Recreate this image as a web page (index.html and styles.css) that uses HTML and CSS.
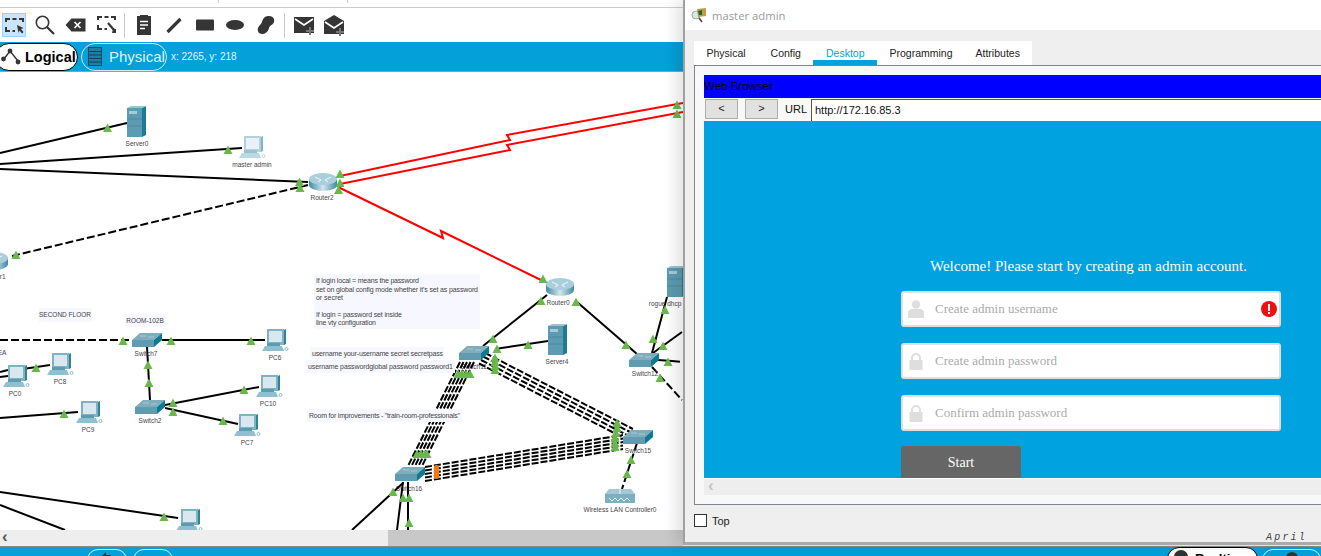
FILE: index.html
```html
<!DOCTYPE html>
<html lang="en">
<head>
<meta charset="utf-8">
<title>Packet Tracer - master admin</title>
<link rel="stylesheet" href="styles.css">
</head>
<body>
<div class="app">
  <div class="topstrip"><i class="tick tick-a"></i><i class="tick tick-b"></i></div>

  <div class="toolbar">
    <span class="tool tool-on"><svg viewBox="0 0 24 24"><path class="stroke-dashbox" d="M4 9V6H8M10.500 6H14.500M17 6H21V9M4 14V18H8M10.500 18H13"/><path class="ink" d="M15 12l6.500 3-2.500 1 2.500 3-1.500 1.500-2.500-3-1 2.500z"/></svg></span>
    <span class="tool"><svg viewBox="0 0 24 24"><circle class="stroke-thin" cx="9.500" cy="9.500" r="6.200"/><path class="stroke-mid" d="M14 14l7 7"/></svg></span>
    <span class="tool"><svg viewBox="0 0 24 24"><path class="ink" d="M2.500 12L8.500 5.500H22.500V18.500H8.500z"/><path class="stroke-white" d="M11.500 9l6 6M17.500 9l-6 6"/></svg></span>
    <span class="tool"><svg viewBox="0 0 24 24"><path class="stroke-dashbox" d="M4 7V4H8M10.500 4H14.500M17 4H21V7M4 12V16H8M10.500 16H13"/><path class="stroke-mid" d="M14 10l6 7"/><path class="ink" d="M19 16h3v4h-4z"/></svg></span>
    <i class="sep"></i>
    <span class="tool"><svg viewBox="0 0 24 24"><path class="ink" d="M5 3H8V2H16V3H19V22H5z"/><path class="stroke-white" d="M8 8.500H16M8 12H16M8 15.500H13"/></svg></span>
    <span class="tool"><svg viewBox="0 0 24 24"><path class="stroke-thick" d="M5.500 19L18.500 6"/></svg></span>
    <span class="tool"><svg viewBox="0 0 24 24"><rect class="ink" x="3" y="6.500" width="18" height="11" rx="1"/></svg></span>
    <span class="tool"><svg viewBox="0 0 24 24"><ellipse class="ink" cx="12" cy="12" rx="9" ry="5"/></svg></span>
    <span class="tool"><svg viewBox="0 0 24 24"><path class="ink" d="M15 3c4 0 6 3 5 6-1 3-4 3-5 6-1 4-4 6-7 6-3 0-5-3-4-6 1-3 3-3 4-6 1-4 3-6 7-6z"/></svg></span>
    <i class="sep"></i>
    <span class="tool"><svg viewBox="0 0 24 24"><path class="ink" d="M2 4H22V20H2z"/><path class="stroke-white" d="M3 6l9 6 9-6"/><path class="stroke-plus" d="M18 14v8M14 18h8"/></svg></span>
    <span class="tool"><svg viewBox="0 0 24 24"><path class="ink" d="M2 8L12 2 22 8V21H2z"/><path class="stroke-white" d="M3 9l9 6 9-6"/><path class="stroke-plus" d="M18 15v8M14 19h8"/></svg></span>
  </div>

  <div class="modebar">
    <span class="pill pill-logical">
      <svg class="mode-icon" viewBox="0 0 20 20"><path class="stroke-node" d="M9 4L3 12M9 4l8 10"/><circle class="ink" cx="9" cy="4" r="2.400"/><circle class="ink" cx="2.500" cy="12" r="2.400"/><circle class="ink" cx="17" cy="15" r="2.400"/></svg>
      <b>Logical</b>
    </span>
    <span class="pill pill-physical">
      <svg class="rack-icon" viewBox="0 0 14 19"><rect class="rack-body" x=".5" y=".5" width="13" height="18"/><path class="rack-line" d="M1 4.500H13M1 8H13M1 11.500H13M1 15H13"/></svg>
      <span>Physical</span>
    </span>
    <span class="coords">x: 2265, y: 218</span>
  </div>

  <svg class="canvas" viewBox="0 72 1321 458" xmlns="http://www.w3.org/2000/svg">
    <defs>
      <linearGradient id="rg" x1="0" x2="1" y1="0" y2="0"><stop offset="0" stop-color="#3f8aa3"/><stop offset=".5" stop-color="#d3e6ec"/><stop offset="1" stop-color="#3f8aa3"/></linearGradient>
      <polygon id="tri" points="0,-4.500 4.500,4 -4.500,4" fill="#6ab84c"/>
      <g id="server">
        <rect x="0" y="2" width="15" height="29" fill="#5c9bb1"/>
        <polygon points="15,2 19,0 19,29 15,31" fill="#1d7c93"/>
        <polygon points="0,2 4,0 19,0 15,2" fill="#9cc3cf"/>
        <rect x="2" y="5" width="8" height="3" fill="#a7cbd6"/>
        <path d="M0 13H15M0 20H15" stroke="#4a8aa0" fill="none"/>
      </g>
      <g id="pc">
        <rect x="5" y="0" width="17" height="16" fill="#7fb3c2"/>
        <polygon points="22,1 24,0 24,15 22,16" fill="#2f8298"/>
        <rect x="7" y="2" width="13" height="11" fill="#d9e8ef"/>
        <polygon points="0,22 3,17 20,17 22,22" fill="#8fc0cf"/>
        <rect x="5" y="14" width="13" height="3" fill="#5c9bb1"/>
        <circle cx="24.500" cy="20" r="1.500" fill="none" stroke="#8fc0cf"/>
      </g>
      <g id="router">
        <path d="M0 6V12A14 6 0 0 0 28 12V6Z" fill="url(#rg)"/>
        <ellipse cx="14" cy="6" rx="14" ry="6" fill="#a9cfdc"/>
        <path d="M6 4l6 3M22 4l-6 3M9 9l3-2M19 9l-3-2" stroke="#f2f8fa" fill="none"/>
      </g>
      <g id="switch">
        <polygon points="0,7 8,0 30,0 22,7" fill="#7fadbc"/>
        <rect x="0" y="7" width="22" height="7" fill="#5f9cb2"/>
        <polygon points="22,7 30,0 30,7 22,14" fill="#0f7a8f"/>
        <path d="M8 3h6M16 4h6" stroke="#a8cad5" fill="none"/>
      </g>
    </defs>

    <g class="lbl">
      <text x="474" y="369">Switch11</text>
      <text x="409" y="491">Switch16</text>
    </g>

    <g class="link">
      <path d="M0 153L127 123"/>
      <path d="M0 164L242 148"/>
      <path d="M0 169L308 182"/>
      <path d="M547 295L483 346"/>
      <path d="M548 341L495 349"/>
      <path d="M577 302L637 354"/>
      <path d="M667 297L652 353"/>
      <path d="M653 353L682 332"/>
      <path d="M658 360L672 361"/>
      <path d="M403 482L397 530"/>
      <path d="M408 482V530"/>
      <path d="M403 483L352 530"/>
      <path d="M162 340H265"/>
      <path d="M147 347L150 400"/>
      <path d="M165 405L259 387"/>
      <path d="M165 408L238 424"/>
      <path d="M0 372L8 370M0 377L8 376"/>
      <path d="M23 369L50 365"/>
      <path d="M0 418L78 412"/>
      <path d="M0 492L178 518"/>
      <path d="M0 505L65 530"/>
    </g>
    <g class="link link-dash">
      <path d="M12 256L308 185"/>
      <path d="M0 340H132"/>
      <path d="M672 361L682 362"/>
      <path d="M652 367L682 400"/>
      <path d="M637 443L622 489"/>
    </g>
    <g class="link-red">
      <path d="M340 176L510 140 507 135 683 103"/>
      <path d="M340 184L510 150 507 145 683 112"/>
      <path d="M338 187L443 238 441 231 543 281"/>
    </g>
    <g class="bundle">
      <path d="M485 353L633 429"/>
      <path d="M483 356.500L630 432"/>
      <path d="M481 360L627 435"/>
      <path d="M479 363.500L624 438"/>
      <path d="M460 362L408 466"/>
      <path d="M463.500 362L411.500 466"/>
      <path d="M467 362L415 466"/>
      <path d="M470.500 362L418.500 466"/>
      <path d="M474 362L422 466"/>
      <path d="M425 467L623 435"/>
      <path d="M425 470.500L623 438.500"/>
      <path d="M425 474L623 442"/>
      <path d="M425 477.500L623 445.500"/>
      <path d="M425 481L623 449"/>
    </g>
    <rect class="marker" x="434" y="465" width="5" height="14" rx="2"/>

    <rect class="note" x="314" y="274" width="166" height="55"/>
    <rect class="note" x="310" y="347" width="134" height="12"/>
    <rect class="note" x="306" y="360" width="149" height="13"/>
    <rect class="note" x="307" y="409" width="155" height="13"/>
    <rect class="note" x="39" y="308" width="53" height="14"/>
    <rect class="note" x="125" y="314" width="41" height="13"/>
    <rect class="note" x="0" y="346" width="8" height="12"/>

    <use href="#server" x="127" y="106"/>
    <use class="faded" href="#pc" x="239" y="136"/>
    <use href="#router" x="309" y="173"/>
    <use href="#router" x="-20" y="252"/>
    <use href="#router" x="546" y="278"/>
    <use href="#server" x="548" y="324"/>
    <use href="#server" x="667" y="266"/>
    <use href="#switch" x="459" y="346"/>
    <use href="#switch" x="629" y="353"/>
    <use href="#switch" x="623" y="430"/>
    <use href="#switch" x="395" y="467"/>
    <use href="#switch" x="132" y="333"/>
    <use href="#switch" x="135" y="400"/>
    <use href="#pc" x="262" y="329"/>
    <use href="#pc" x="256" y="375"/>
    <use href="#pc" x="234" y="414"/>
    <use href="#pc" x="3" y="365"/>
    <use href="#pc" x="47" y="353"/>
    <use href="#pc" x="76" y="401"/>
    <use href="#pc" x="176" y="509"/>
    <g>
      <rect x="605" y="494" width="30" height="9" fill="#7cb0c1"/>
      <polygon points="609,489 631,489 635,494 605,494" fill="#a3c8d4"/>
      <path d="M620 488v6M609 498l3 3 3-3 3 3 3-3 3 3 3-3 3 3" stroke="#eef6f8" fill="none"/>
    </g>

    <g class="tris">
      <use href="#tri" x="107.500" y="128"/><use href="#tri" x="228" y="150"/><use href="#tri" x="299.500" y="182"/>
      <use href="#tri" x="300" y="188"/><use href="#tri" x="16" y="255"/><use href="#tri" x="340" y="174"/>
      <use href="#tri" x="340" y="183"/><use href="#tri" x="338.500" y="190"/>
      <use href="#tri" x="677" y="105"/><use href="#tri" x="677" y="114"/>
      <use href="#tri" x="543" y="279"/><use href="#tri" x="541" y="301"/><use href="#tri" x="576" y="302"/>
      <use href="#tri" x="493" y="339"/><use href="#tri" x="528" y="345"/><use href="#tri" x="497" y="349"/>
      <use href="#tri" x="626" y="345"/><use href="#tri" x="665" y="310"/><use href="#tri" x="653" y="339"/>
      <use href="#tri" x="663" y="346"/><use href="#tri" x="668" y="362"/><use href="#tri" x="660" y="378"/>
      <use href="#tri" x="495" y="358"/><use href="#tri" x="495" y="362"/><use href="#tri" x="495" y="366"/><use href="#tri" x="495" y="370"/>
      <use href="#tri" x="458" y="374"/><use href="#tri" x="462" y="374"/><use href="#tri" x="466" y="374"/><use href="#tri" x="470" y="374"/>
      <use href="#tri" x="417" y="454"/><use href="#tri" x="421" y="454"/><use href="#tri" x="425" y="454"/><use href="#tri" x="427" y="454"/>
      <use href="#tri" x="617" y="423"/><use href="#tri" x="617" y="428"/><use href="#tri" x="616" y="433"/><use href="#tri" x="615" y="438"/><use href="#tri" x="615" y="443"/><use href="#tri" x="615" y="447"/>
      <use href="#tri" x="631" y="460"/><use href="#tri" x="627" y="474"/>
      <use href="#tri" x="393" y="492"/><use href="#tri" x="403" y="498"/><use href="#tri" x="409" y="498"/><use href="#tri" x="409" y="523"/>
      <use href="#tri" x="123" y="341"/><use href="#tri" x="171" y="341"/><use href="#tri" x="251" y="341"/>
      <use href="#tri" x="148" y="365"/><use href="#tri" x="149" y="383"/>
      <use href="#tri" x="244" y="390"/><use href="#tri" x="173" y="403"/><use href="#tri" x="223" y="421"/><use href="#tri" x="173" y="412"/>
      <use href="#tri" x="36" y="368"/><use href="#tri" x="64" y="414"/><use href="#tri" x="164" y="517"/>
    </g>

    <g class="lbl">
      <text x="137" y="146">Server0</text>
      <text x="252" y="167">master admin</text>
      <text x="322" y="200">Router2</text>
      <text x="-6" y="279">Router1</text>
      <text x="558" y="305">Router0</text>
      <text x="557" y="364">Server4</text>
      <text x="675" y="306">rogue dhcp server</text>
      <text x="645" y="376">Switch12</text>
      <text x="638" y="453">Switch15</text>
      <text x="620" y="512">Wireless LAN Controller0</text>
      <text x="146" y="356">Switch7</text>
      <text x="150" y="423">Switch2</text>
      <text x="275" y="360">PC6</text>
      <text x="268" y="406">PC10</text>
      <text x="247" y="445">PC7</text>
      <text x="15" y="396">PC0</text>
      <text x="60" y="384">PC8</text>
      <text x="88" y="432">PC9</text>
      <text x="65" y="317">SECOND FLOOR</text>
      <text x="145" y="323">ROOM-102B</text>
      <text x="2" y="355">EA</text>
    </g>
    <g class="notetext">
      <text x="316" y="283" textLength="103" lengthAdjust="spacing">If login local = means the password</text>
      <text x="316" y="292" textLength="162" lengthAdjust="spacing">set on global config mode whether it's set as password</text>
      <text x="316" y="300" textLength="27" lengthAdjust="spacing">or secret</text>
      <text x="316" y="317" textLength="86" lengthAdjust="spacing">If login = password set inside</text>
      <text x="316" y="325" textLength="60" lengthAdjust="spacing">line vty configuration</text>
      <text x="312" y="356" textLength="131" lengthAdjust="spacing">username your-username secret secretpass</text>
      <text x="308" y="369" textLength="145" lengthAdjust="spacing">username passwordglobal password password1</text>
      <text x="309" y="418" textLength="151" lengthAdjust="spacing">Room for improvements - "train-room-professionals"</text>
    </g>
  </svg>

  <div class="hscroll"><span class="hscroll-track"><span class="hscroll-arrow">‹</span></span><span class="hscroll-thumb"></span></div>

  <div class="footer">
    <span class="fpill fpill-a"><svg viewBox="0 0 16 10"><path class="ink" d="M3 5l4-4v3h3c2 0 4 2 4 5H3z"/></svg></span>
    <span class="fpill fpill-b"></span>
    <span class="fgrow"></span>
    <span class="realtime"><i class="rt-dot"></i><b>Realtime</b></span>
    <span class="fpill fpill-c"><svg viewBox="0 0 16 10"><circle class="ink" cx="8" cy="7" r="6"/></svg></span>
  </div>

  <section class="window">
    <header class="titlebar">
      <svg class="title-icon" viewBox="0 0 16 16"><circle cx="5" cy="8" r="4" fill="#dfe4e4" stroke="#9aa" stroke-width="1"/><path d="M8 11l3 4" stroke="#444" stroke-width="1.500"/><path d="M6 2l9-1 0 8-8 1z" fill="#c59a3c"/><path d="M7 4l4-1 0 5-3 0z" fill="#1c6b2a"/></svg>
      <span>master admin</span>
    </header>
    <div class="win-body">
      <nav class="tabs">
        <span class="tab">Physical</span>
        <span class="tab">Config</span>
        <span class="tab tab-on">Desktop</span>
        <span class="tab tab-prog">Programming</span>
        <span class="tab">Attributes</span>
      </nav>
      <div class="panel">
        <div class="app-title">Web Browser</div>
        <div class="navrow">
          <span class="navbtn">&lt;</span>
          <span class="navbtn">&gt;</span>
          <span class="url-label">URL</span>
          <span class="url-box">http://172.16.85.3</span>
        </div>
        <div class="page">
          <div class="welcome">Welcome! Please start by creating an admin account.</div>
          <div class="form">
            <div class="field">
              <svg class="field-icon" viewBox="0 0 16 18"><circle cx="8" cy="4.500" r="4.200"/><path d="M0 18V13c0-2.500 2-4 4-4h8c2 0 4 1.500 4 4v5z"/></svg>
              <span>Create admin username</span>
              <svg class="alert" viewBox="0 0 16 16"><circle cx="8" cy="8" r="8" fill="#ee0f0f"/><rect x="7" y="3" width="2" height="7" fill="#fff"/><rect x="7" y="11" width="2" height="2" fill="#fff"/></svg>
            </div>
            <div class="field">
              <svg class="field-icon" viewBox="0 0 16 18"><path class="lock-arc" d="M4 9V6a4 4 0 0 1 8 0v3"/><rect x="1.500" y="8" width="13" height="10"/></svg>
              <span>Create admin password</span>
            </div>
            <div class="field">
              <svg class="field-icon" viewBox="0 0 16 18"><path class="lock-arc" d="M4 9V6a4 4 0 0 1 8 0v3"/><rect x="1.500" y="8" width="13" height="10"/></svg>
              <span>Confirm admin password</span>
            </div>
            <div class="start">Start</div>
          </div>
        </div>
        <div class="page-scroll"><span>‹</span></div>
      </div>
      <label class="topcheck"><i class="box"></i><span>Top</span></label>
    </div>
  </section>

  <span class="watermark">April</span>
</div>
</body>
</html>
```

FILE: styles.css
```css
* { box-sizing: border-box; }
html, body { margin: 0; padding: 0; background: #fff; }
body { font-family: "Liberation Sans", Arial, sans-serif; }

.app { position: relative; width: 1321px; height: 556px; overflow: hidden; display: flex; flex-direction: column; }

.topstrip { position: relative; height: 8px; background: #fff; border-bottom: 1px solid #ccc; flex: none; }
.tick { position: absolute; top: 0; width: 1px; height: 3px; background: #ccc; }
.tick-a { left: 218px; }
.tick-b { left: 347px; }

.toolbar { height: 34px; flex: none; display: flex; align-items: center; gap: 6.5px; padding-left: 2px; background: #fff; }
.tool { width: 24px; height: 24px; display: block; flex: none; }
.tool svg { display: block; width: 24px; height: 24px; }
.tool-on { background: #cce4f7; border: 1px solid #99d1ff; }
.tool-on svg { margin: -1px; }
.sep { width: 1px; height: 25px; background: #c8c8c8; flex: none; }
.ink { fill: #353535; }
.stroke-dashbox { fill: none; stroke: #353535; stroke-width: 2; }
.stroke-thin { fill: none; stroke: #353535; stroke-width: 1.6; }
.stroke-mid { fill: none; stroke: #353535; stroke-width: 2.2; }
.stroke-thick { fill: none; stroke: #353535; stroke-width: 3.2; }
.stroke-white { fill: none; stroke: #fff; stroke-width: 1.6; }
.stroke-plus { fill: none; stroke: #777; stroke-width: 2; }
.stroke-node { fill: none; stroke: #353535; stroke-width: 1.4; }

.modebar { height: 30px; flex: none; display: flex; align-items: center; background: #03a0d9; border-bottom: 1px solid #9a9a9a; }
.pill { height: 28px; border-radius: 14px; display: flex; align-items: center; flex: none; }
.pill-logical { width: 83px; margin-left: -5px; background: #fff; border: 1px solid #000; padding-left: 5px; color: #000; font-size: 14.500px; }
.pill-logical b { margin-left: 4px; }
.mode-icon { width: 20px; height: 20px; flex: none; }
.pill-physical { width: 86px; margin-left: 3px; border: 1px solid #cfeaf5; padding-left: 6px; font-size: 15px; color: #dff3fb; }
.pill-physical span { margin-left: 7px; }
.rack-icon { width: 14px; height: 19px; flex: none; }
.rack-body { fill: #1f7ea6; stroke: #1c4a60; }
.rack-line { stroke: #1c3f52; fill: none; }
.coords { margin-left: 4px; font-size: 10px; color: #e4f5fb; }

.canvas { display: block; width: 1321px; height: 458px; flex: none; background: #fff; }
.link { fill: none; stroke: #000; stroke-width: 2; }
.link-dash { stroke-dasharray: 8 3; }
.link-red { fill: none; stroke: #f00; stroke-width: 2; }
.bundle { fill: none; stroke: #000; stroke-width: 2; stroke-dasharray: 7 2; }
.marker { fill: #f47a10; }
.note { fill: #f7f8ff; }
.faded { opacity: .6; }
.lbl { font: 6.500px "Liberation Sans", Arial, sans-serif; fill: #444; text-anchor: middle; }
.notetext { font: 7px "Liberation Sans", Arial, sans-serif; fill: #444; }

.hscroll { height: 16px; flex: none; display: flex; background: #eee; }
.hscroll-track { width: 388px; position: relative; padding-left: 2px; font-size: 17px; line-height: 13px; font-weight: bold; color: #555; }
.hscroll-thumb { width: 295px; background: #c8c8c8; }

.footer { height: 10px; flex: none; display: flex; background: #03a0d9; border-top: 1px solid #8a8a8a; padding-left: 87px; overflow: hidden; align-items: flex-start; }
.fpill { width: 40px; height: 22px; margin-top: 2px; flex: none; border: 1px solid #d8eff8; border-radius: 12px; display: block; }
.fpill svg { display: block; width: 16px; height: 10px; margin: 1px auto 0; }
.fpill-b { margin-left: 6px; }
.fgrow { flex: 1; }
.realtime { width: 91px; height: 24px; flex: none; background: #fff; border: 1px solid #000; border-radius: 12px; display: flex; align-items: flex-start; padding: 2px 0 0 6px; font-size: 13px; line-height: 14px; }
.realtime b { margin-top: 2px; }
.rt-dot { width: 14px; height: 14px; border-radius: 50%; background: #333; flex: none; margin-right: 7px; }
.fpill-c { margin-left: 4px; width: 59px; }

.window { position: absolute; left: 683px; top: 0; width: 638px; height: 545px; background: #efefef; border-left: 2px solid #a0a0a0; border-bottom: 3px solid #aaa; box-shadow: -8px 0 12px rgba(0, 0, 0, .1); display: flex; flex-direction: column; }
.titlebar { height: 30px; flex: none; background: #fff; display: flex; align-items: center; padding-left: 6px; font-family: "Open Sans", "Noto Sans", sans-serif; font-size: 11.300px; color: #9a9a9a; }
.title-icon { width: 16px; height: 16px; margin-right: 5px; flex: none; }
.win-body { flex: 1; padding: 11px 0 0 9px; min-height: 0; display: flex; flex-direction: column; }
.tabs { display: flex; width: 338px; height: 24px; flex: none; background: #fff; font-size: 10.500px; color: #222; }
.tab { padding: 6px 12.500px 0; height: 24px; flex: none; }
.tab-on { color: #06a0dc; border-bottom: 5px solid #06a0dc; }
.tab-prog { padding-right: 10.500px; }
.panel { height: 440px; flex: none; background: #f8f8f8; border-left: 1px solid #80868c; border-top: 1px solid #80868c; border-bottom: 1px solid #80868c; padding-top: 9px; padding-left: 9px; }
.app-title { height: 23px; background: #00f; color: #000; font-size: 11.500px; line-height: 23px; }
.navrow { height: 23px; display: flex; align-items: flex-start; padding-top: 1px; font-size: 11px; background: #f8f8f8; }
.navbtn { width: 33px; height: 20px; margin-left: 1px; margin-right: 7px; flex: none; background: #e1e1e1; border: 1px solid #adadad; text-align: center; line-height: 17px; color: #222; }
.navbtn + .navbtn { margin-left: 0; }
.url-label { width: 26px; flex: none; line-height: 21px; color: #111; }
.url-box { flex: 1; height: 22px; background: #fff; border-top: 1px solid #555; border-left: 1px solid #555; padding-left: 3px; line-height: 21px; color: #111; }
.page { height: 357px; background: #01a2e0; overflow: hidden; padding: 135px 0 0 197px; font-family: "Liberation Serif", "Times New Roman", serif; }
.welcome { margin-left: 29px; height: 20px; line-height: 20px; font-size: 15px; color: #fff; white-space: nowrap; }
.form { width: 380px; margin-top: 15px; display: flex; flex-direction: column; gap: 16px; }
.field { height: 36px; background: #fff; border: 2px solid #dedede; border-radius: 3px; display: flex; align-items: center; padding-left: 5px; position: relative; font-size: 13px; color: #aaa; }
.field-icon { width: 16px; height: 18px; flex: none; margin-right: 11px; fill: #dedede; }
.lock-arc { fill: none; stroke: #dedede; stroke-width: 2; }
.alert { position: absolute; right: 2px; top: 8px; width: 16px; height: 16px; }
.start { width: 120px; height: 32px; margin-top: -1px; background: #666; border-radius: 3px 3px 0 0; color: #fff; font-size: 14px; line-height: 33px; text-align: center; }
.page-scroll { height: 17px; background: #eee; border-top: 1px solid #fff; padding-left: 4px; color: #c4c4c4; font-size: 17px; font-weight: bold; line-height: 13px; }
.topcheck { display: flex; align-items: center; margin-top: 9px; font-size: 11px; color: #222; }
.box { width: 13px; height: 13px; background: #fff; border: 1px solid #333; margin-right: 5px; flex: none; }

.watermark { position: absolute; left: 1266px; top: 532px; font: italic 10px "Liberation Mono", monospace; letter-spacing: 2.200px; color: #444; }
```
